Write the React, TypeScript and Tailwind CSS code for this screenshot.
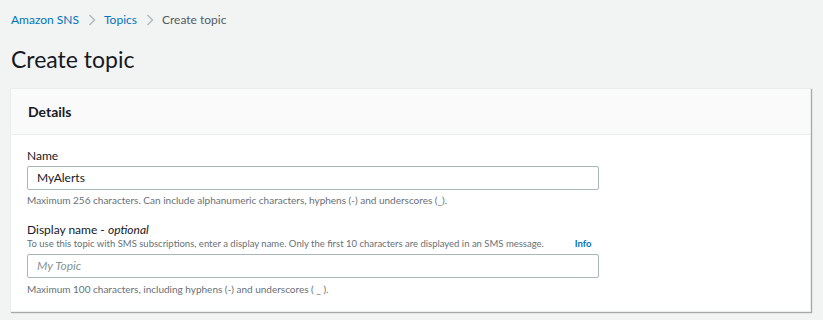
import React from 'react';

const Chevron: React.FC = () => (
    <svg width="8" height="12" viewBox="0 0 8 12" className="ml-[9px] mr-[8px]">
        <path d="M1.5 1l5 5-5 5" fill="none" stroke="#aab7b8" strokeWidth="1.3" />
    </svg>
);

const App: React.FC = () => {
    return (
        <div className="min-h-[320px] bg-[#f2f3f3] text-[#16191f]" style={{ fontFamily: 'Lato, "Open Sans", sans-serif' }}>
            {/* breadcrumbs */}
            <div className="flex items-center px-[11px] pt-[12px] text-[12px] leading-[16px]">
                <span className="text-[#0073bb]">Amazon SNS</span>
                <Chevron />
                <span className="text-[#0073bb]">Topics</span>
                <Chevron />
                <span className="text-[#545b64]">Create topic</span>
            </div>

            <h1 className="px-[11px] pt-[16px] text-[23px] leading-[30px] text-[#16191f]">Create topic</h1>

            {/* details card */}
            <div className="ml-[10px] mr-[12px] mt-[14px] bg-white border border-[#eaeded] shadow-[1px_1px_1px_0_rgba(0,0,0,0.3)]">
                <div className="bg-[#fafafa] border-b border-[#eaeded] px-[17px] h-[46px] flex items-center">
                    <h2 className="text-[14px] font-bold">Details</h2>
                </div>
                <div className="px-[16px] pt-[13px] pb-[15px]">
                    <div className="text-[12px] leading-[16px]">Name</div>
                    <div className="mt-[2px] w-[572px] h-[24px] border border-[#aab7b8] rounded-[2px] flex items-center px-[9px] text-[12px]">
                        MyAlerts
                    </div>
                    <div className="mt-[3px] text-[10px] leading-[14px] text-[#687078]">
                        Maximum 256 characters. Can include alphanumeric characters, hyphens (-) and underscores (_).
                    </div>

                    <div className="mt-[15px] text-[12px] leading-[16px]">
                        Display name - <i>optional</i>
                    </div>
                    <div className="text-[9.5px] leading-[12px] text-[#687078]">
                        To use this topic with SMS subscriptions, enter a display name. Only the first 10 characters are displayed in an SMS message.
                        <span className="ml-[31px] font-bold text-[#0073bb]">Info</span>
                    </div>
                    <div className="mt-[4px] w-[572px] h-[24px] border border-[#aab7b8] rounded-[2px] flex items-center px-[9px] text-[12px] italic text-[#879596]">
                        My Topic
                    </div>
                    <div className="mt-[4px] text-[10px] leading-[14px] text-[#687078]">
                        Maximum 100 characters, including hyphens (-) and underscores ( _ ).
                    </div>
                </div>
            </div>
        </div>
    );
};

export default App;
